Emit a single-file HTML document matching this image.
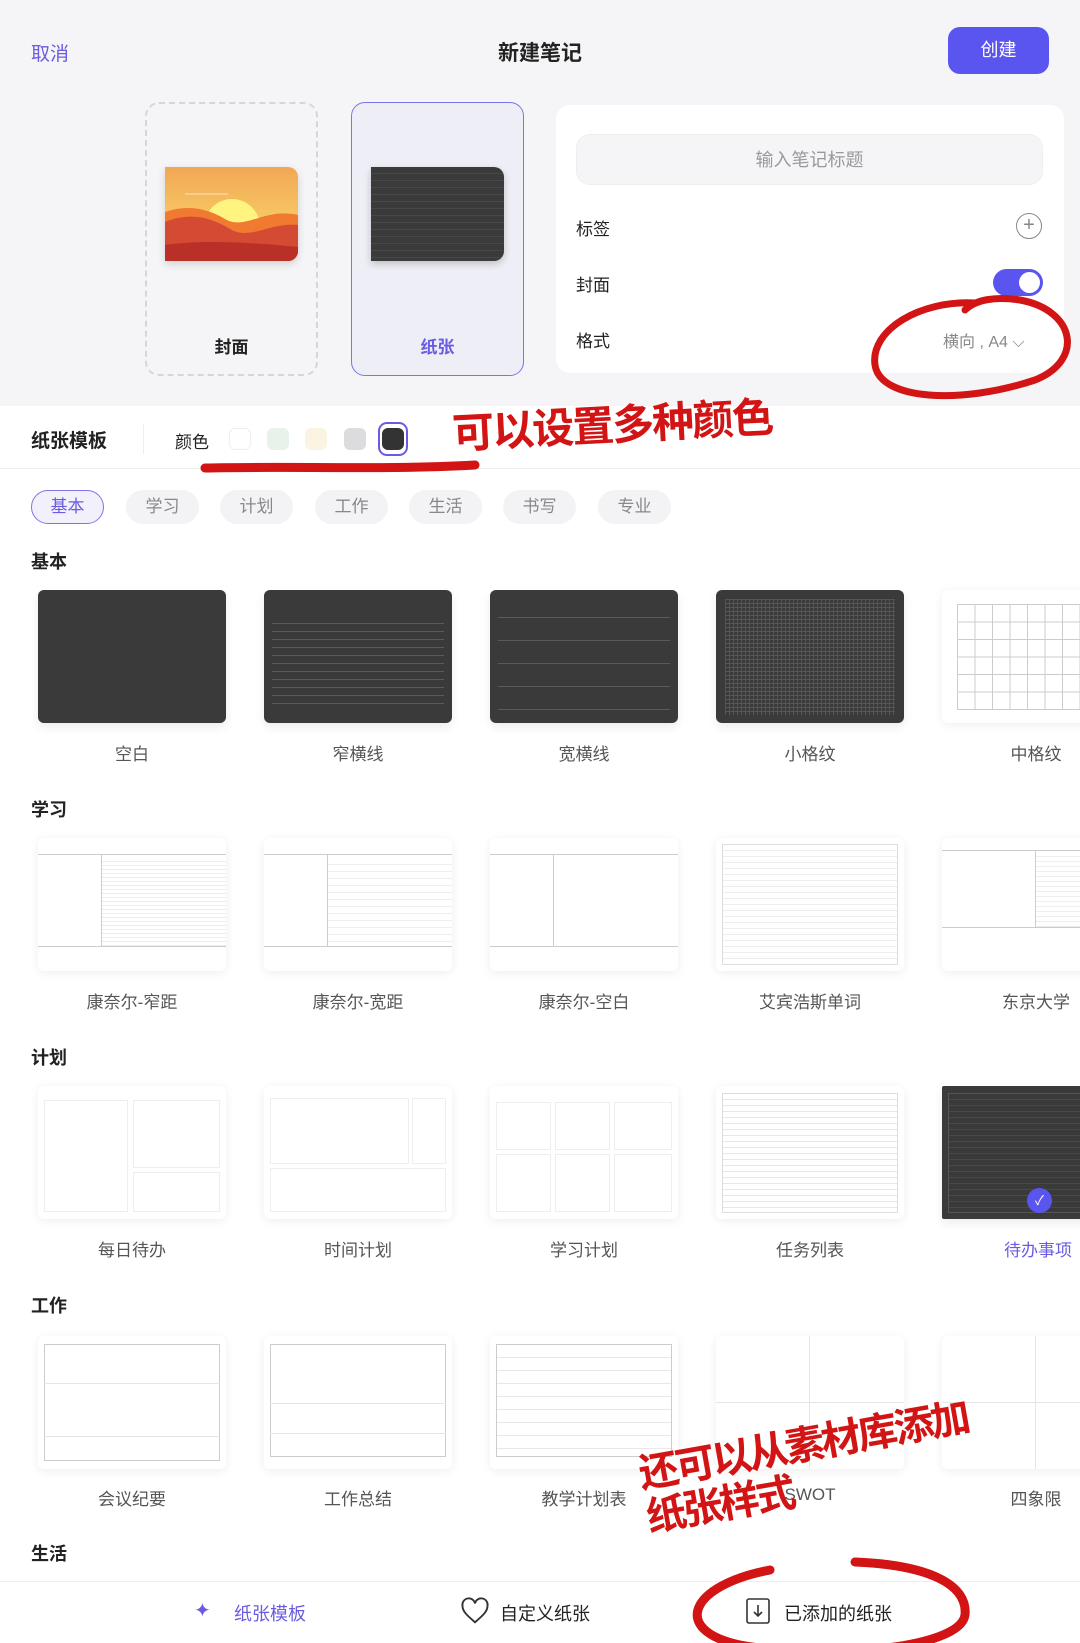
<!DOCTYPE html>
<html><head><meta charset="utf-8">
<style>
*{margin:0;padding:0;box-sizing:border-box}
body{width:1080px;height:1643px;overflow:hidden;background:#fff;font-family:"Liberation Sans","Noto Sans CJK SC",sans-serif;position:relative;color:#222}
.a{position:absolute}
.top{left:0;top:0;width:1080px;height:406px;background:#f5f5f7}
.t{font-size:19px}
.card{border-radius:14px}
.thumb{position:absolute;width:188px;height:133px;border-radius:6px;box-shadow:0 4px 10px rgba(0,0,0,.08);overflow:hidden}
.dark{background:#3a3a3a}
.white{background:#fff;box-shadow:0 2px 10px rgba(0,0,0,.07)}
.lab{position:absolute;width:188px;text-align:center;font-size:17px;color:#555}
.sec{position:absolute;left:31px;font-size:18px;font-weight:bold;color:#222}
.tab{position:absolute;top:490px;width:73px;height:34px;border-radius:17px;background:#f3f3f5;color:#888;font-size:17px;text-align:center;line-height:34px}
.sw{position:absolute;top:428px;width:22px;height:22px;border-radius:6px}
.hw{position:absolute;color:#d21414;font-family:"WenQuanYi Zen Hei","Noto Sans CJK SC",sans-serif;font-weight:bold}
</style></head><body>
<div class="a top"></div>
<div class="a t" style="left:31px;top:39px;color:#6a5ce0">取消</div>
<div class="a" style="left:0;width:1080px;top:37px;text-align:center;font-size:21px;font-weight:bold">新建笔记</div>
<div class="a" style="left:948px;top:27px;width:101px;height:47px;border-radius:12px;background:#5b55f0;color:#fff;font-size:18px;text-align:center;line-height:47px">创建</div>

<div class="a card" style="left:145px;top:102px;width:173px;height:274px;border:2px dashed #d6d6d6"></div>
<div class="a" style="left:165px;top:167px;width:133px;height:94px;border-radius:0 10px 10px 0;overflow:hidden;box-shadow:0 3px 8px rgba(0,0,0,.15)">
<svg width="133" height="94" viewBox="0 0 133 94"><defs><linearGradient id="g" x1="0" y1="0" x2="0" y2="1"><stop offset="0" stop-color="#f2a755"/><stop offset="1" stop-color="#fbe070"/></linearGradient></defs>
<rect width="133" height="94" fill="url(#g)"/><circle cx="67" cy="60" r="28" fill="#fff47f"/>
<path d="M0 45 C20 38 40 40 60 52 C80 64 100 40 133 48 L133 94 L0 94Z" fill="#f07a30"/>
<path d="M0 55 C25 45 45 50 65 62 C85 74 105 55 133 58 L133 94 L0 94Z" fill="#d44a32"/>
<path d="M0 78 C40 72 90 76 133 80 L133 94 L0 94Z" fill="#b83028"/>
<line x1="20" y1="27" x2="63" y2="27" stroke="#fff" stroke-opacity=".6"/></svg></div>
<div class="a" style="left:145px;top:333px;width:173px;text-align:center;font-size:17px;font-weight:bold">封面</div>

<div class="a card" style="left:351px;top:102px;width:173px;height:274px;border:1.5px solid #7c74e8;background:#eeeff6"></div>
<div class="a" style="left:371px;top:167px;width:133px;height:94px;border-radius:0 10px 10px 0;background:#3a3a3a;box-shadow:0 3px 8px rgba(0,0,0,.2);background-image:repeating-linear-gradient(#3a3a3a 0 6px,#474747 6px 7px)"></div>
<div class="a" style="left:351px;top:333px;width:173px;text-align:center;font-size:17px;font-weight:bold;color:#6a5ce0">纸张</div>

<div class="a" style="left:556px;top:105px;width:508px;height:268px;background:#fff;border-radius:14px"></div>
<div class="a" style="left:576px;top:134px;width:467px;height:51px;border-radius:14px;background:#f5f5f7;border:1px solid #eee;text-align:center;line-height:50px;font-size:18px;color:#999">输入笔记标题</div>
<div class="a" style="left:576px;top:215px;font-size:17px">标签</div>
<div class="a" style="left:1016px;top:213px;width:26px;height:26px;border:1.5px solid #888;border-radius:50%;text-align:center;line-height:22px;font-size:20px;color:#888">+</div>
<div class="a" style="left:576px;top:271px;font-size:17px">封面</div>
<div class="a" style="left:993px;top:269px;width:50px;height:27px;border-radius:14px;background:#5b55f0"><div class="a" style="right:3px;top:3px;width:21px;height:21px;border-radius:50%;background:#fff"></div></div>
<div class="a" style="left:576px;top:327px;font-size:17px">格式</div>
<div class="a" style="left:943px;top:328px;font-size:16px;color:#888">横向 , A4 ⌵</div>

<div class="a" style="left:31px;top:426px;font-size:19px;font-weight:bold">纸张模板</div>
<div class="a" style="left:143px;top:424px;width:1px;height:30px;background:#eee"></div>
<div class="a" style="left:175px;top:428px;font-size:17px">颜色</div>
<div class="sw" style="left:229px;background:#fff;border:1px solid #eee"></div>
<div class="sw" style="left:267px;background:#e6f2ea"></div>
<div class="sw" style="left:305px;background:#fbf4e2"></div>
<div class="sw" style="left:344px;background:#dcdcde"></div>
<div class="a" style="left:378px;top:422px;width:30px;height:34px;border:2px solid #6a5ce0;border-radius:9px"></div>
<div class="sw" style="left:382px;top:428px;background:#333;border-radius:6px"></div>
<div class="a" style="left:0;top:468px;width:1080px;height:1px;background:#eee"></div>

<div class="tab" style="left:31px;background:#f2f1fb;border:1.5px solid #7c74e8;color:#6a5ce0;line-height:31px">基本</div>
<div class="tab" style="left:126px">学习</div>
<div class="tab" style="left:220px">计划</div>
<div class="tab" style="left:315px">工作</div>
<div class="tab" style="left:409px">生活</div>
<div class="tab" style="left:503px">书写</div>
<div class="tab" style="left:598px">专业</div>

<div class="sec" style="top:548px">基本</div>
<div class="thumb dark" style="left:38px;top:590px"></div>
<div class="thumb dark" style="left:264px;top:590px;background-image:repeating-linear-gradient(#3a3a3a 0 7px,#5a5a5a 7px 8px);background-size:172px 88px;background-position:8px 26px;background-repeat:no-repeat"></div>
<div class="thumb dark" style="left:490px;top:590px;background-image:repeating-linear-gradient(#3a3a3a 0 22px,#5a5a5a 22px 23px);background-size:172px 115px;background-position:8px 5px;background-repeat:no-repeat"></div>
<div class="thumb dark" style="left:716px;top:590px"><div class="a" style="left:9px;top:9px;width:170px;height:116px;background-image:repeating-linear-gradient(90deg,#555 0 1px,transparent 1px 4px),repeating-linear-gradient(#555 0 1px,transparent 1px 4px)"></div></div>
<div class="thumb white" style="left:942px;top:590px"><div class="a" style="left:15px;top:14px;width:180px;height:106px;background-image:repeating-linear-gradient(90deg,#ccc 0 1px,transparent 1px 17.5px),repeating-linear-gradient(#ccc 0 1px,transparent 1px 17.5px)"></div></div>
<div class="lab" style="left:38px;top:740px">空白</div><div class="lab" style="left:264px;top:740px">窄横线</div><div class="lab" style="left:490px;top:740px">宽横线</div><div class="lab" style="left:716px;top:740px">小格纹</div><div class="lab" style="left:942px;top:740px">中格纹</div>

<div class="sec" style="top:796px">学习</div>
<div class="thumb white" style="left:38px;top:838px"><div class="a" style="left:0;top:16px;width:188px;height:1px;background:#ccc"></div><div class="a" style="left:63px;top:16px;width:1px;height:92px;background:#ccc"></div><div class="a" style="left:64px;top:20px;width:124px;height:88px;background:repeating-linear-gradient(#fff 0 3px,#eee 3px 4px)"></div><div class="a" style="left:0;top:108px;width:188px;height:1px;background:#ccc"></div></div>
<div class="thumb white" style="left:264px;top:838px"><div class="a" style="left:0;top:16px;width:188px;height:1px;background:#ccc"></div><div class="a" style="left:63px;top:16px;width:1px;height:92px;background:#ccc"></div><div class="a" style="left:64px;top:20px;width:124px;height:88px;background:repeating-linear-gradient(#fff 0 6px,#eee 6px 7px)"></div><div class="a" style="left:0;top:108px;width:188px;height:1px;background:#ccc"></div></div>
<div class="thumb white" style="left:490px;top:838px"><div class="a" style="left:0;top:16px;width:188px;height:1px;background:#ccc"></div><div class="a" style="left:63px;top:16px;width:1px;height:92px;background:#ccc"></div><div class="a" style="left:0;top:108px;width:188px;height:1px;background:#ccc"></div></div>
<div class="thumb white" style="left:716px;top:838px"><div class="a" style="left:6px;top:6px;width:176px;height:121px;border:1px solid #ddd;background:repeating-linear-gradient(#fff 0 5px,#eee 5px 6px)"></div></div>
<div class="thumb white" style="left:942px;top:838px"><div class="a" style="left:0;top:12px;width:188px;height:1px;background:#ccc"></div><div class="a" style="left:93px;top:12px;width:1px;height:77px;background:#ccc"></div><div class="a" style="left:94px;top:14px;width:94px;height:75px;background:repeating-linear-gradient(#fff 0 4px,#eee 4px 5px)"></div><div class="a" style="left:0;top:89px;width:188px;height:1px;background:#ccc"></div></div>
<div class="lab" style="left:38px;top:988px">康奈尔-窄距</div><div class="lab" style="left:264px;top:988px">康奈尔-宽距</div><div class="lab" style="left:490px;top:988px">康奈尔-空白</div><div class="lab" style="left:716px;top:988px">艾宾浩斯单词</div><div class="lab" style="left:942px;top:988px">东京大学</div>

<div class="sec" style="top:1044px">计划</div>
<div class="thumb white" style="left:38px;top:1086px"><div class="a" style="left:6px;top:14px;width:84px;height:112px;border:1px solid #eee"></div><div class="a" style="left:95px;top:14px;width:87px;height:68px;border:1px solid #eee"></div><div class="a" style="left:95px;top:86px;width:87px;height:40px;border:1px solid #eee"></div></div>
<div class="thumb white" style="left:264px;top:1086px"><div class="a" style="left:6px;top:12px;width:139px;height:66px;border:1px solid #eee"></div><div class="a" style="left:148px;top:12px;width:34px;height:66px;border:1px solid #eee"></div><div class="a" style="left:6px;top:82px;width:176px;height:44px;border:1px solid #eee"></div></div>
<div class="thumb white" style="left:490px;top:1086px"><div class="a" style="left:6px;top:16px;width:55px;height:48px;border:1px solid #eee"></div><div class="a" style="left:65px;top:16px;width:55px;height:48px;border:1px solid #eee"></div><div class="a" style="left:124px;top:16px;width:58px;height:48px;border:1px solid #eee"></div><div class="a" style="left:6px;top:68px;width:55px;height:58px;border:1px solid #eee"></div><div class="a" style="left:65px;top:68px;width:55px;height:58px;border:1px solid #eee"></div><div class="a" style="left:124px;top:68px;width:58px;height:58px;border:1px solid #eee"></div></div>
<div class="thumb white" style="left:716px;top:1086px"><div class="a" style="left:6px;top:7px;width:176px;height:120px;border:1px solid #ddd;background:repeating-linear-gradient(#fff 0 5px,#e8e8e8 5px 6px)"></div></div>
<div class="thumb dark" style="left:942px;top:1086px;border-radius:2px"><div class="a" style="left:6px;top:7px;width:182px;height:120px;border:1px solid #555;background:repeating-linear-gradient(#3a3a3a 0 5px,#484848 5px 6px)"></div><div class="a" style="left:85px;top:102px;width:25px;height:25px;border-radius:50%;background:#5b55f0;color:#fff;text-align:center;line-height:25px;font-size:13px">✓</div></div>
<div class="lab" style="left:38px;top:1236px">每日待办</div><div class="lab" style="left:264px;top:1236px">时间计划</div><div class="lab" style="left:490px;top:1236px">学习计划</div><div class="lab" style="left:716px;top:1236px">任务列表</div><div class="lab" style="left:942px;top:1236px;color:#6a5ce0;text-align:left;padding-left:62px">待办事项</div>

<div class="sec" style="top:1292px">工作</div>
<div class="thumb white" style="left:38px;top:1336px"><div class="a" style="left:6px;top:8px;width:176px;height:117px;border:1px solid #ccc"></div><div class="a" style="left:6px;top:47px;width:176px;height:1px;background:#e5e5e5"></div><div class="a" style="left:6px;top:100px;width:176px;height:1px;background:#e5e5e5"></div></div>
<div class="thumb white" style="left:264px;top:1336px"><div class="a" style="left:6px;top:8px;width:176px;height:113px;border:1px solid #ccc"></div><div class="a" style="left:6px;top:67px;width:176px;height:1px;background:#e5e5e5"></div><div class="a" style="left:6px;top:97px;width:176px;height:1px;background:#e5e5e5"></div></div>
<div class="thumb white" style="left:490px;top:1336px"><div class="a" style="left:6px;top:8px;width:176px;height:113px;border:1px solid #ccc;background:repeating-linear-gradient(#fff 0 12px,#e8e8e8 12px 13px),#fff"></div></div>
<div class="thumb white" style="left:716px;top:1336px"><div class="a" style="left:93px;top:0;width:1px;height:133px;background:#e5e5e5"></div><div class="a" style="left:0;top:66px;width:188px;height:1px;background:#e5e5e5"></div></div>
<div class="thumb white" style="left:942px;top:1336px"><div class="a" style="left:93px;top:0;width:1px;height:133px;background:#e5e5e5"></div><div class="a" style="left:0;top:66px;width:188px;height:1px;background:#e5e5e5"></div></div>
<div class="lab" style="left:38px;top:1485px">会议纪要</div><div class="lab" style="left:264px;top:1485px">工作总结</div><div class="lab" style="left:490px;top:1485px">教学计划表</div><div class="lab" style="left:716px;top:1485px">SWOT</div><div class="lab" style="left:942px;top:1485px">四象限</div>

<div class="sec" style="top:1540px">生活</div>
<div class="a" style="left:0;top:1581px;width:1080px;height:62px;background:#fff;border-top:1px solid #eee"></div>
<div class="a" style="left:194px;top:1598px;font-size:20px;color:#6a5ce0">✦</div>
<div class="a" style="left:234px;top:1600px;font-size:18px;color:#6a5ce0">纸张模板</div>
<svg class="a" style="left:460px;top:1596px" width="30" height="30" viewBox="0 0 24 24"><path d="M12 21 C5 15 2 12 2 8 A5 5 0 0 1 12 6 A5 5 0 0 1 22 8 C22 12 19 15 12 21Z" fill="none" stroke="#333" stroke-width="1.5"/></svg>
<div class="a" style="left:500px;top:1600px;font-size:18px">自定义纸张</div>
<svg class="a" style="left:745px;top:1596px" width="26" height="30" viewBox="0 0 26 30"><rect x="2" y="3" width="22" height="24" rx="2" fill="none" stroke="#333" stroke-width="1.6"/><path d="M13 9 V20 M9 16 L13 20 L17 16" fill="none" stroke="#333" stroke-width="1.6"/></svg>
<div class="a" style="left:784px;top:1600px;font-size:18px">已添加的纸张</div>

<svg class="a" style="left:0;top:0" width="1080" height="1643">
<g fill="none" stroke="#d21414" stroke-linecap="round">
<path d="M975 303 C920 300 870 330 875 365 C880 400 960 405 1035 380 C1085 360 1075 310 1020 300 C995 296 975 300 965 310" stroke-width="7"/>
<path d="M205 468 C290 466 390 470 475 465" stroke-width="9"/>
<path d="M770 1570 C690 1585 670 1630 740 1645 C820 1660 960 1650 965 1615 C968 1585 930 1565 855 1562" stroke-width="9"/>
</g></svg>
<div class="hw" style="left:452px;top:392px;font-size:42px;transform:rotate(-3deg);letter-spacing:-2px">可以设置多种颜色</div>
<div class="hw" style="left:640px;top:1420px;font-size:40px;transform:rotate(-10deg);letter-spacing:-3px;line-height:44px">还可以从素材库添加<br>纸张样式</div>
</body></html>
